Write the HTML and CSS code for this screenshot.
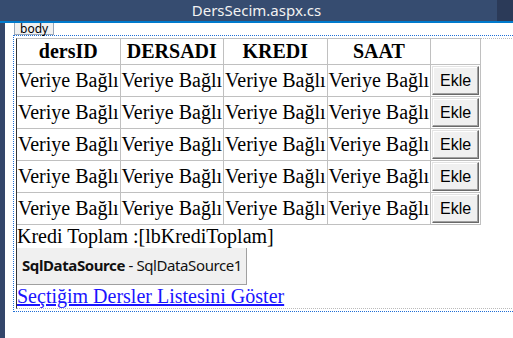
FILE: index.html
```html
<!DOCTYPE html>
<html lang="tr">
<head>
    <meta charset="UTF-8">
    <meta name="viewport" content="width=device-width, initial-scale=1.0">
    <title>DersSecim.aspx.cs</title>
    <link rel="stylesheet" href="styles.css">
</head>
<body>
    <div class="titlebar">
        <span class="title">DersSecim.aspx.cs</span>
        <span class="titlebar-end"></span>
    </div>
    <div class="workspace">
        <div class="gutter"></div>
        <div class="canvas">
            <div class="tag">body</div>
            <div class="body-outline">
                <div class="form">
                    <table class="grid">
                        <tr>
                            <th>dersID</th><th>DERSADI</th><th>KREDI</th><th>SAAT</th><th></th>
                        </tr>
                        <tr>
                            <td>Veriye Bağlı</td><td>Veriye Bağlı</td><td>Veriye Bağlı</td><td>Veriye Bağlı</td>
                            <td><button class="btn">Ekle</button></td>
                        </tr>
                        <tr>
                            <td>Veriye Bağlı</td><td>Veriye Bağlı</td><td>Veriye Bağlı</td><td>Veriye Bağlı</td>
                            <td><button class="btn">Ekle</button></td>
                        </tr>
                        <tr>
                            <td>Veriye Bağlı</td><td>Veriye Bağlı</td><td>Veriye Bağlı</td><td>Veriye Bağlı</td>
                            <td><button class="btn">Ekle</button></td>
                        </tr>
                        <tr>
                            <td>Veriye Bağlı</td><td>Veriye Bağlı</td><td>Veriye Bağlı</td><td>Veriye Bağlı</td>
                            <td><button class="btn">Ekle</button></td>
                        </tr>
                        <tr>
                            <td>Veriye Bağlı</td><td>Veriye Bağlı</td><td>Veriye Bağlı</td><td>Veriye Bağlı</td>
                            <td><button class="btn">Ekle</button></td>
                        </tr>
                    </table>
                    <div class="total">Kredi Toplam :[lbKrediToplam]</div>
                    <div class="datasource"><b>SqlDataSource</b> - SqlDataSource1</div>
                    <a class="link" href="#">Seçtiğim Dersler Listesini Göster</a>
                </div>
            </div>
        </div>
    </div>
</body>
</html>
```

FILE: styles.css
```css
html, body {
    margin: 0;
    padding: 0;
    height: 100%;
    overflow: hidden;
    background: #fff;
}
.titlebar {
    display: flex;
    height: 21px;
    background: #364c70;
    border-bottom: 2px solid #007acc;
}
.title {
    flex: 1;
    text-align: center;
    color: #f2f2f2;
    font-family: "Noto Sans", sans-serif;
    font-size: 15px;
    line-height: 21px;
    padding-left: 16px;
}
.titlebar-end {
    width: 16px;
    background: #2b3a58;
}
.workspace {
    display: flex;
    height: calc(100% - 23px);
}
.gutter {
    width: 5px;
    flex: none;
    background: #33466a;
}
.canvas {
    flex: 1;
    min-width: 0;
}
.tag {
    width: fit-content;
    margin-left: 9px;
    height: 11px;
    padding: 0 5px;
    border: 1px solid #9aa7b8;
    border-top: none;
    background: #f0f0f0;
    font-family: "Noto Sans", sans-serif;
    font-size: 12px;
    line-height: 11px;
}
.body-outline {
    margin-left: 8px;
    margin-right: -20px;
    padding: 2px 0 2px 2px;
    border: 1px dotted #1f6fd6;
}
.form {
    border-left: 1px solid #333;
    border-top: 1px dotted #bbb;
    border-bottom: 1px dotted #bbb;
    font-family: "Liberation Serif", "Times New Roman", serif;
    font-size: 20px;
    color: #000;
}
.grid {
    border-collapse: collapse;
    margin-top: -1px;
    border: 1px solid #c0c0c0;
    border-left: none;
}
.grid th,
.grid td {
    border: 1px solid #c0c0c0;
    padding: 1px;
    white-space: nowrap;
}
.grid tr > :first-child {
    border-left: none;
}
.grid th {
    font-weight: bold;
    text-align: center;
    line-height: 23px;
}
.grid td {
    line-height: 29px;
}
.btn {
    display: block;
    width: 47px;
    height: 29px;
    padding: 0;
    background: #f0f0f0;
    border: 1px solid;
    border-color: #e3e3e3 #696969 #696969 #e3e3e3;
    box-shadow: inset -1px -1px #a0a0a0, inset 1px 1px #fff;
    font-family: "Liberation Sans", Arial, sans-serif;
    font-size: 16px;
    color: #000;
}
.total {
    line-height: 23px;
}
.datasource {
    width: 224px;
    height: 36px;
    padding-left: 5px;
    background: #f0f0f0;
    border-right: 1px solid #a0a0a0;
    border-bottom: 1px solid #a0a0a0;
    font-family: "Noto Sans", sans-serif;
    font-size: 15px;
    letter-spacing: -0.4px;
    line-height: 34px;
    color: #111;
}
.link {
    display: inline-block;
    color: #1a14ff;
    line-height: 21px;
}
```
